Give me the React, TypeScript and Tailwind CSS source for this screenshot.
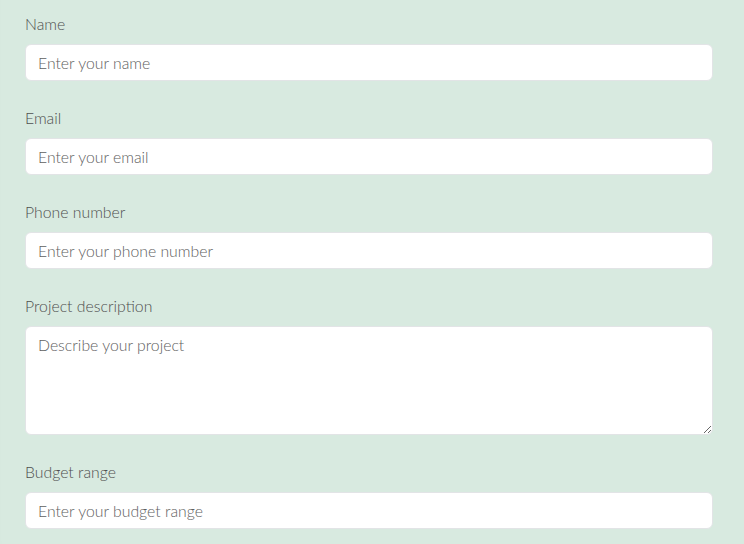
const fields = [
  { label: "Name", placeholder: "Enter your name", type: "text" },
  { label: "Email", placeholder: "Enter your email", type: "email" },
  { label: "Phone number", placeholder: "Enter your phone number", type: "tel" },
  { label: "Project description", placeholder: "Describe your project", textarea: true },
  { label: "Budget range", placeholder: "Enter your budget range", type: "text" },
];

export default function App() {
  return (
    <main
      className="min-h-[544px] w-full overflow-hidden bg-[#d8eae0] px-[25px] pt-[13px] shadow-[inset_2px_-10px_12px_-10px_rgba(0,0,0,0.08)]"
      style={{ fontFamily: "Lato, 'Open Sans', sans-serif" }}
    >
      <form className="w-[688px]">
        {fields.map((f) => (
          <div key={f.label} className="mb-[26px]">
            <label className="mb-[9px] block text-[15.8px] font-light leading-[22px] text-[#4f4f4f]">
              {f.label}
            </label>
            {f.textarea ? (
              <textarea
                placeholder={f.placeholder}
                className="block h-[109px] w-full resize-y rounded-[6px] border border-[#e2e4e6] bg-white px-[12px] py-[7px] text-[15.8px] font-light leading-[21px] text-[#444] placeholder:text-[#606060] focus:outline-none"
              />
            ) : (
              <input
                type={f.type}
                placeholder={f.placeholder}
                className="block h-[37px] w-full rounded-[6px] border border-[#e2e4e6] bg-white px-[12px] text-[15.8px] font-light text-[#444] placeholder:text-[#606060] focus:outline-none"
              />
            )}
          </div>
        ))}
      </form>
    </main>
  );
}
